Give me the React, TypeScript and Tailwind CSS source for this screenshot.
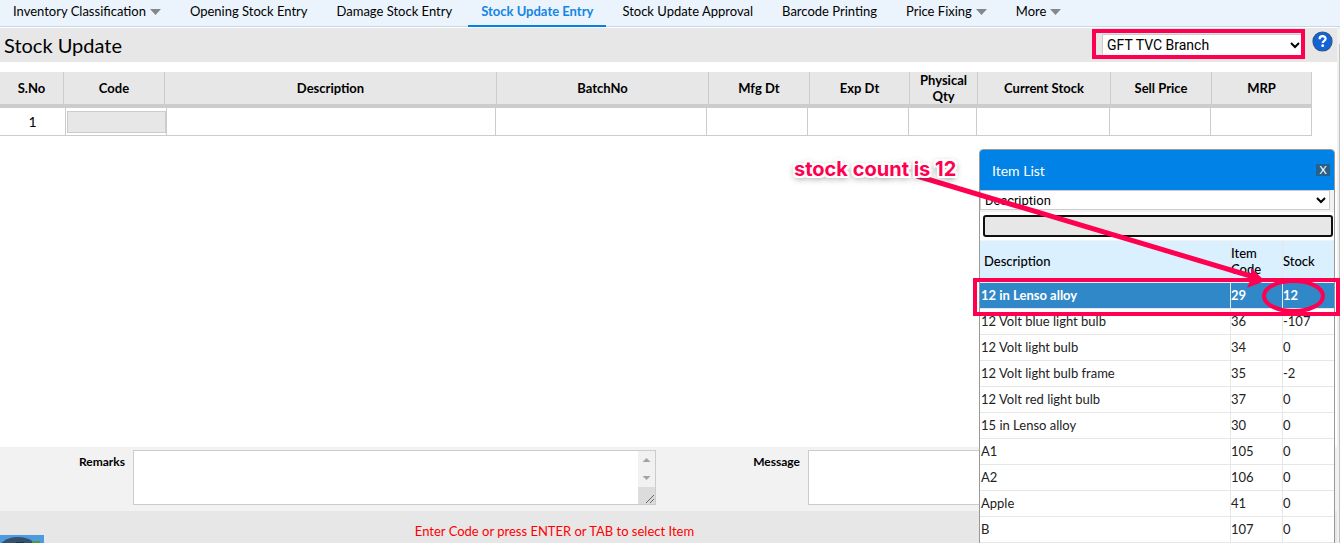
import { useState } from "react";
import clsx from "clsx";

interface Tab {
  label: string;
  menu?: boolean;
}

interface Item {
  name: string;
  code: number;
  stock: number;
}

const tabs: Tab[] = [
  { label: "Inventory Classification", menu: true },
  { label: "Opening Stock Entry" },
  { label: "Damage Stock Entry" },
  { label: "Stock Update Entry" },
  { label: "Stock Update Approval" },
  { label: "Barcode Printing" },
  { label: "Price Fixing", menu: true },
  { label: "More", menu: true },
];

const items: Item[] = [
  { name: "12 in Lenso alloy", code: 29, stock: 12 },
  { name: "12 Volt blue light bulb", code: 36, stock: -107 },
  { name: "12 Volt light bulb", code: 34, stock: 0 },
  { name: "12 Volt light bulb frame", code: 35, stock: -2 },
  { name: "12 Volt red light bulb", code: 37, stock: 0 },
  { name: "15 in Lenso alloy", code: 30, stock: 0 },
  { name: "A1", code: 105, stock: 0 },
  { name: "A2", code: 106, stock: 0 },
  { name: "Apple", code: 41, stock: 0 },
  { name: "B", code: 107, stock: 0 },
];

const columns = [
  { label: "S.No", head: "w-16", body: "w-[66px]" },
  { label: "Code", head: "w-[101px]", body: "w-[101px]" },
  { label: "Description", head: "", body: "" },
  { label: "BatchNo", head: "w-[212px]", body: "w-[211px]" },
  { label: "Mfg Dt", head: "w-[101px]", body: "w-[101px]" },
  { label: "Exp Dt", head: "w-[100px]", body: "w-[101px]" },
  { label: "Physical Qty", head: "w-[68px]", body: "w-[68px]" },
  { label: "Current Stock", head: "w-[133px]", body: "w-[133px]" },
  { label: "Sell Price", head: "w-[101px]", body: "w-[101px]" },
  { label: "MRP", head: "w-[100px]", body: "w-[101px]" },
];

const NavTabs = () => {
  const [active, setActive] = useState("Stock Update Entry");

  return (
    <nav className="flex h-[27px] shrink-0 gap-[3px] border-b border-[#c8d9e4] bg-[#ebf4fc]">
      {tabs.map((tab) => (
        <button
          key={tab.label}
          type="button"
          onClick={() => setActive(tab.label)}
          className={clsx(
            "flex h-[27px] items-center gap-1 border-b-2 px-[13px] pb-[2px] whitespace-nowrap",
            tab.label === active ? "border-[#0082e6] font-bold text-[#1484e6]" : "border-transparent"
          )}
        >
          {tab.label}
          {tab.menu && (
            <svg width="11" height="6" viewBox="0 0 11 6" className="mt-px" aria-hidden="true">
              <path d="M0 0h11L5.500 6z" fill="#84888c" />
            </svg>
          )}
        </button>
      ))}
    </nav>
  );
};

const TitleBar = () => (
  <header className="mt-px flex h-[34px] shrink-0 items-center bg-[#e7e7e7] pr-1 pl-1">
    <h1 className="flex-1 text-[20px]">Stock Update</h1>
    <select
      aria-label="Branch"
      className="mr-2 h-[22px] w-[202px] border border-[#ccc] bg-white font-[Roboto,sans-serif] text-sm leading-5"
    >
      <option>GFT TVC Branch</option>
    </select>
    <button type="button" aria-label="Help" className="mb-2">
      <svg width="21" height="21" viewBox="0 0 21 21">
        <circle cx="10.500" cy="10.500" r="9.500" fill="#1463d8" stroke="#27598c" strokeWidth="1.200" />
        <path
          d="M7.600 8.200c0-4 6-3.900 6 -.4 0 2-2.900 2.200-2.900 4.200"
          fill="none"
          stroke="#fff"
          strokeWidth="2.200"
        />
        <circle cx="10.700" cy="14.700" r="1.400" fill="#fff" />
      </svg>
    </button>
  </header>
);

const StockTable = () => (
  <div className="mt-[10px] pr-[25px]">
    <table className="w-full table-fixed border-separate border-spacing-0">
      <thead>
        <tr className="h-9 bg-[#e7e7e7]">
          {columns.map((col) => (
            <th
              key={col.label}
              scope="col"
              className={clsx(
                "border-r border-b-4 border-[#ccc] px-2 text-[13px] leading-4 font-bold",
                col.head
              )}
            >
              {col.label}
            </th>
          ))}
        </tr>
      </thead>
    </table>
    <table className="w-full table-fixed border-separate border-spacing-0">
      <tbody>
        <tr className="h-7">
          {columns.map((col, i) => (
            <td
              key={col.label}
              className={clsx("border-r border-b border-[#ccc] p-0 text-center text-sm", col.body)}
            >
              {i === 0 && "1"}
              {i === 1 && (
                <input
                  aria-label="Code"
                  className="ml-px block h-[22px] w-[99px] border border-[#ccc] bg-[#e7e7e7] px-1"
                />
              )}
            </td>
          ))}
        </tr>
      </tbody>
    </table>
  </div>
);

const NotesBar = () => (
  <div className="flex h-16 shrink-0 items-start bg-[#f2f2f2] pt-[3px] pr-1 text-xs font-bold">
    <label htmlFor="remarks" className="w-[133px] pt-1 pr-2 text-right leading-4">
      Remarks
    </label>
    <div className="relative flex-1">
      <textarea
        id="remarks"
        className="block h-[55px] w-full resize-none border border-[#ccc] bg-white pr-5 font-normal"
      />
      <svg width="17" height="53" viewBox="0 0 17 53" className="absolute top-px right-px" aria-hidden="true">
        <path d="M0 0h17v36H0z" fill="#f1f1f1" />
        <path d="M0 36h17v17H0z" fill="#dcdcdc" />
        <path d="M4.500 11h8l-4-4zM4.500 25h8l-4 4z" fill="#a3a3a3" />
        <path d="M8 52l8-8M12 52l4-4" stroke="#666" fill="none" />
      </svg>
    </div>
    <label htmlFor="message" className="w-[152px] pt-1 pr-2 text-right leading-4">
      Message
    </label>
    <textarea id="message" className="h-[55px] flex-1 border border-[#ccc] bg-white font-normal" />
  </div>
);

const StatusBar = () => (
  <footer className="flex h-8 shrink-0 items-end bg-[#e7e7e7]">
    <svg width="44" height="8" viewBox="0 0 44 8" className="shrink-0" aria-hidden="true">
      <path d="M0 0h44v8H0z" fill="#4c9ae0" />
      <ellipse cx="18" cy="16" rx="20" ry="14" fill="#34506f" />
      <path d="M16 7h8v1h-8z" fill="#1d3149" />
      <path d="M32 6h8v2h-8z" fill="#4d9a3c" />
    </svg>
    <p className="w-full pr-[272px] pb-[2px] text-center leading-5 text-[#f00]">
      Enter Code or press ENTER or TAB to select Item
    </p>
  </footer>
);

const ItemList = () => {
  const [selected, setSelected] = useState(29);

  return (
    <section className="absolute top-[149px] right-[5px] w-[356px] rounded-t-[4px] border border-[#999] bg-[#f2f2f2]">
      <div className="flex h-10 items-center justify-between rounded-t-[3px] bg-[#0082e6] pr-1 pl-3 text-white">
        <h2 className="pt-[2px] text-sm">Item List</h2>
        <button
          type="button"
          aria-label="Close"
          className="h-3 w-[14px] bg-[#28608c] text-[11px] leading-3"
        >
          X
        </button>
      </div>
      <select
        aria-label="Search by"
        className="block h-5 w-[350px] border border-[#ccc] bg-white font-[Roboto,sans-serif] text-[13px] leading-4"
      >
        <option>Description</option>
        <option>Item Code</option>
      </select>
      <div className="mt-[2px] bg-white py-[3px] pr-px pl-[3px]">
        <input
          aria-label="Search items"
          className="block h-[22px] w-full rounded-[3px] border-2 border-[#101010] bg-[#e7e7e7] px-1"
        />
      </div>
      <table className="mt-px w-full table-fixed border-separate border-spacing-0 bg-white text-[#222]">
        <thead>
          <tr className="h-[42px] bg-[#dbf0ff] text-left leading-4">
            <th scope="col" className="p-0 pb-[2px] pl-1 font-medium text-black">
              Description
            </th>
            <th scope="col" className="w-[52px] border-l border-[#e7e7e7] p-0 pr-4 pb-[2px] font-medium text-black">
              Item Code
            </th>
            <th scope="col" className="w-[52px] border-l border-[#e7e7e7] p-0 pb-[2px] font-medium text-black">
              Stock
            </th>
          </tr>
        </thead>
        <tbody>
          {items.map((item) => (
            <tr
              key={item.code}
              onClick={() => setSelected(item.code)}
              className={clsx("h-[26px]", item.code === selected && "bg-[#3088c8] font-bold text-white")}
            >
              <td className="border-b border-[#e7e7e7] p-0 pl-px">{item.name}</td>
              <td className="border-b border-l border-[#e7e7e7] p-0">{item.code}</td>
              <td className="border-b border-l border-[#e7e7e7] p-0">{item.stock}</td>
            </tr>
          ))}
        </tbody>
      </table>
    </section>
  );
};

// Callouts drawn over the page, anchored to the right edge like the item list
const Annotations = () => (
  <div className="pointer-events-none absolute top-0 right-0 h-[543px] w-[560px]">
    <svg width="560" height="543" viewBox="780 0 560 543" fill="none" stroke="#ff0050" strokeWidth="4">
      <rect x="1094" y="31" width="209" height="26" />
      <rect x="975" y="280" width="363" height="34" />
      <ellipse cx="1293.500" cy="296" rx="29.500" ry="15" />
      <path d="M917 176L1254 277" strokeWidth="5" />
      <path d="M1265 281L1247 288L1251 278L1251 268z" fill="#ff0050" stroke="none" />
    </svg>
    <p className="absolute top-[157px] left-[14px] font-[Inter,sans-serif] text-[20px] leading-6 font-bold whitespace-nowrap text-[#ff0050] [text-shadow:2px_0_#fff,-2px_0_#fff,0_2px_#fff,0_-2px_#fff,2px_2px_#fff,-2px_-2px_#fff,2px_-2px_#fff,-2px_2px_#fff,0_2px_7px_#444]">
      stock count is 12
    </p>
  </div>
);

const App = () => (
  <div className="relative flex h-screen flex-col overflow-hidden bg-white font-[Lato,sans-serif] text-[13px] text-black">
    <NavTabs />
    <div className="flex min-h-0 flex-1">
      <main className="flex min-w-0 flex-1 flex-col">
        <TitleBar />
        <StockTable />
        <div className="flex-1" />
        <NotesBar />
        <StatusBar />
      </main>
      <div className="w-[3px] bg-[#f1f1f1] pt-[17px] pl-[2px]">
        <div className="h-full bg-[#c1c1c1]" />
      </div>
    </div>
    <ItemList />
    <Annotations />
  </div>
);

export default App;
